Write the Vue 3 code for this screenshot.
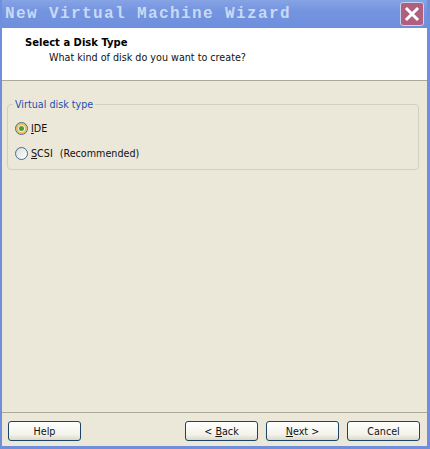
<template>
  <div class="wizard">
    <div class="titlebar">
      <span class="title">New Virtual Machine Wizard</span>
      <button class="close-btn" aria-label="Close">
        <svg width="16" height="16" viewBox="0 0 16 16">
          <path d="M3 3 L13 13 M13 3 L3 13" stroke="#fff" stroke-width="3" stroke-linecap="square" fill="none" />
        </svg>
      </button>
    </div>

    <div class="content">
      <div class="header">
        <div class="header-title">Select a Disk Type</div>
        <div class="header-sub">What kind of disk do you want to create?</div>
      </div>

      <div class="main">
        <fieldset class="group">
          <legend>Virtual disk type</legend>
          <label class="radio-row" v-for="opt in options" :key="opt.id">
            <span class="radio" :class="{ checked: selected === opt.id }" @click="selected = opt.id">
              <span v-if="selected === opt.id" class="dot"></span>
            </span>
            <span class="radio-text"><u>{{ opt.label[0] }}</u>{{ opt.label.slice(1) }}</span>
            <span v-if="opt.note" class="note">{{ opt.note }}</span>
          </label>
        </fieldset>
      </div>

      <div class="footer">
        <button class="btn">Help</button>
        <div class="nav">
          <button class="btn">&lt; <u>B</u>ack</button>
          <button class="btn"><u>N</u>ext &gt;</button>
          <button class="btn">Cancel</button>
        </div>
      </div>
    </div>
  </div>
</template>

<script setup>
import { ref } from 'vue';

const selected = ref('ide');
const options = [
  { id: 'ide', label: 'IDE' },
  { id: 'scsi', label: 'SCSI', note: '(Recommended)' }
];
</script>

<style scoped>
.wizard {
  width: 430px;
  height: 449px;
  display: flex;
  flex-direction: column;
  background: #6f8fdc;
  box-sizing: border-box;
  padding: 0 3px 3px 2px;
  font-family: "DejaVu Sans", sans-serif;
  font-size: 9.6px;
  color: #111;
  overflow: hidden;
}

.titlebar {
  height: 28px;
  flex: none;
  display: flex;
  align-items: center;
  justify-content: space-between;
  padding: 0 0 1px 3px;
  box-sizing: border-box;
  background: linear-gradient(to bottom, #86a3e4, #7494e0 40%, #6e8fdd);
}

.title {
  font-family: "Liberation Mono", monospace;
  font-weight: 700;
  font-size: 16px;
  letter-spacing: 1.4px;
  color: #c8daf2;
}

.close-btn {
  width: 24px;
  height: 24px;
  margin-right: 3px;
  padding: 0;
  display: flex;
  align-items: center;
  justify-content: center;
  border: 1px solid #c9d3ec;
  border-radius: 3px;
  background: #b0607e;
}

.content {
  flex: 1;
  display: flex;
  flex-direction: column;
  background: #ebe8d9;
  min-height: 0;
}

.header {
  height: 53px;
  flex: none;
  box-sizing: border-box;
  background: #fff;
  border-bottom: 1px solid #aca899;
  padding: 9px 0 0 23px;
}

.header-title {
  font-size: 10px;
  font-weight: 700;
  color: #000;
}

.header-sub {
  margin: 4px 0 0 24px;
  color: #111;
}

.main {
  flex: 1;
  padding: 18px 8px 0 5px;
}

.group {
  margin: 0;
  height: 71px;
  box-sizing: border-box;
  padding: 6px 6px 0 7px;
  border: 1px solid #d3d0c2;
  border-radius: 4px;
}

legend {
  padding: 0 2px;
  margin-left: -2px;
  color: #1c4fa8;
}

.radio-row {
  display: flex;
  align-items: center;
  height: 25px;
}

.radio {
  width: 11px;
  height: 11px;
  flex: none;
  border: 1px solid #4a6a8c;
  border-radius: 50%;
  background: linear-gradient(135deg, #dcdcd6, #fff);
  display: flex;
  align-items: center;
  justify-content: center;
}

.radio.checked {
  box-shadow: inset 0 0 0 2px #eebc58;
}

.dot {
  width: 5px;
  height: 5px;
  border-radius: 50%;
  background: #4aa02c;
}

.radio-text {
  margin-left: 3px;
}

.note {
  margin-left: 7px;
}

.footer {
  flex: none;
  height: 34px;
  box-sizing: border-box;
  border-top: 1px solid #aca899;
  display: flex;
  justify-content: space-between;
  padding: 8px 7px 0 6px;
}

.nav {
  display: flex;
  gap: 8px;
}

.btn {
  width: 73px;
  height: 20px;
  padding: 0;
  font: inherit;
  color: #111;
  border: 1px solid #1c4466;
  border-radius: 3px;
  background: linear-gradient(to bottom, #fff, #f3f2ea 70%, #dcd8c8);
}
</style>

<style>
html, body {
  margin: 0;
  background: #6f8fdc;
}
</style>
